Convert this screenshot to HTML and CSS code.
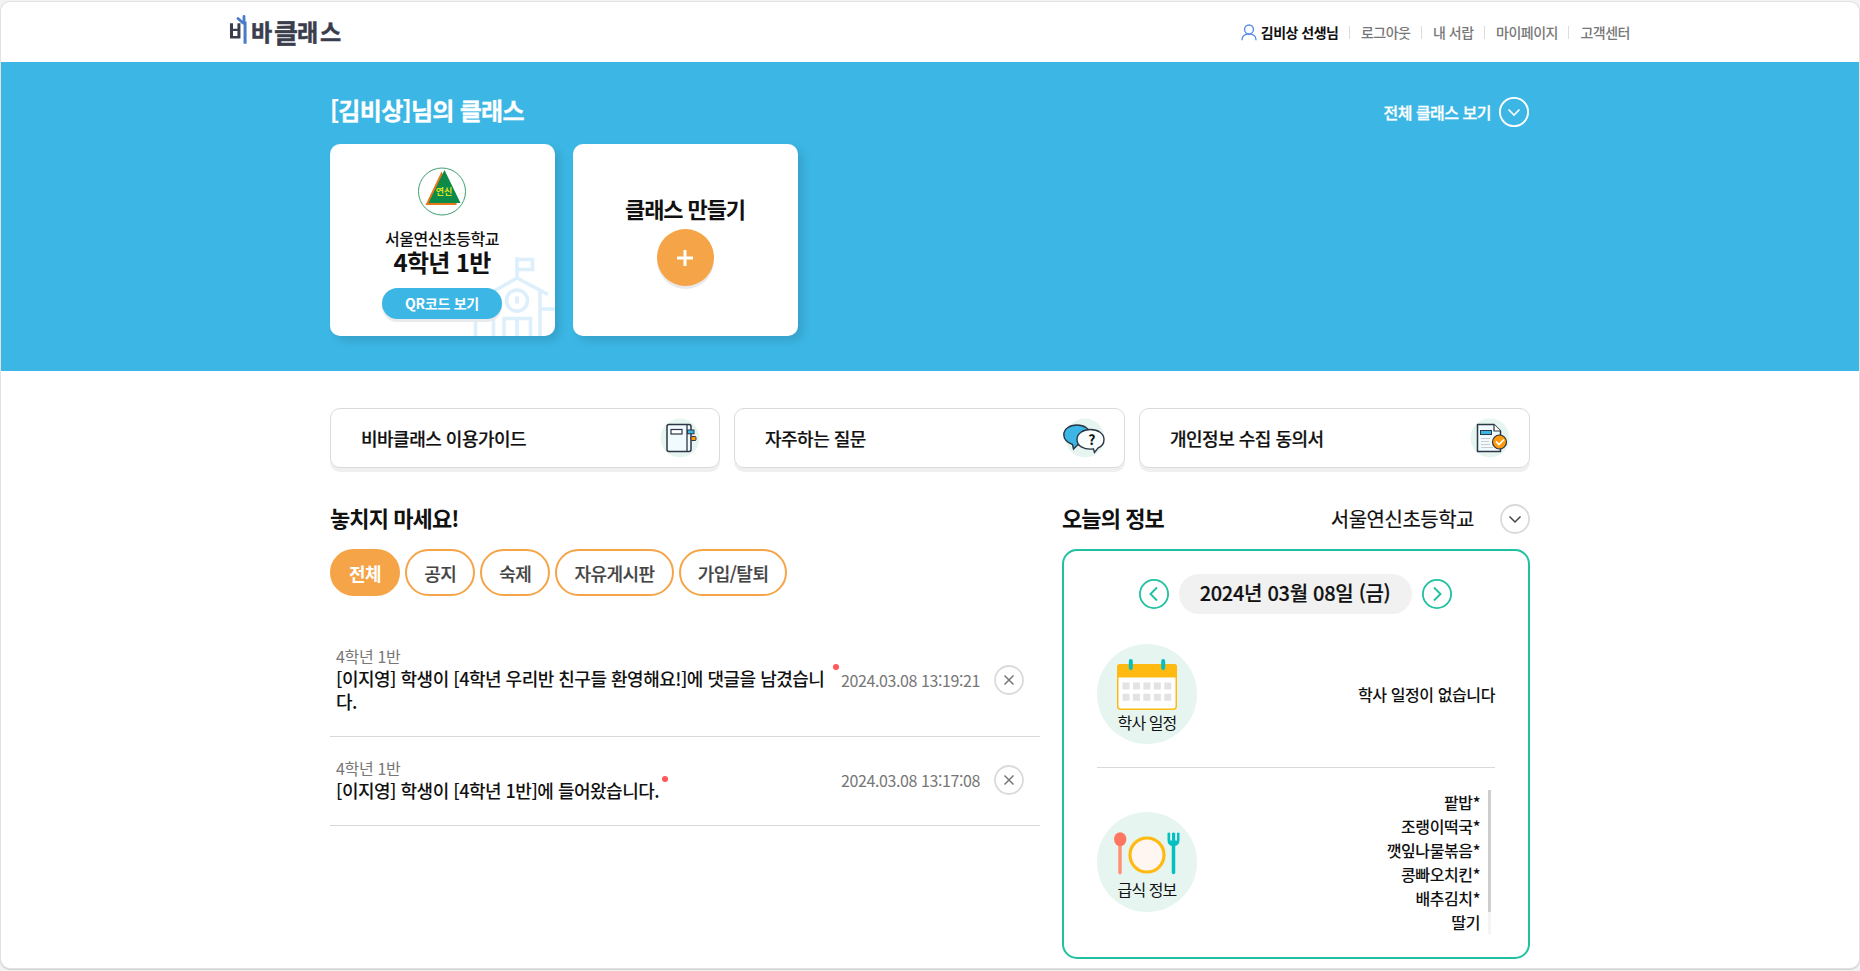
FILE: index.html
```html
<!DOCTYPE html>
<html lang="ko">
<head>
<meta charset="utf-8">
<title>비바클래스</title>
<link rel="stylesheet" href="styles.css">
</head>
<body>
<div class="page">
  <header class="header">
    <a class="logo">
      <span class="logo-first">비</span><span>바</span><span class="logo-tall">클</span><span>래</span><span>스</span>
      <svg class="logo-sprout" width="12" height="10" viewBox="0 0 12 10"><path d="M2 3.500L7 8M8 1.500L8 8" fill="none" stroke="#4a7bc8" stroke-width="2.800" stroke-linecap="round"/></svg>
    </a>
    <nav class="nav">
      <span class="nav-user"><svg width="16" height="17" viewBox="1 0 16 18" fill="none" stroke="#5a8cf0" stroke-width="1.500"><circle cx="9" cy="5.800" r="4.700"/><path d="M1.500 17.200C1.500 13.500 4 10.800 9 10.500C14 10.800 16.500 13.500 16.500 17.200"/></svg><b>김비상 선생님</b></span>
      <span>로그아웃</span><span>내 서랍</span><span>마이페이지</span><span>고객센터</span>
    </nav>
  </header>

  <section class="hero">
    <div class="container">
      <div class="hero-head">
        <h1>[김비상]님의 클래스</h1>
        <a class="all-classes">전체 클래스 보기
          <svg width="30" height="30" viewBox="0 0 30 30" fill="none" stroke="#fff"><circle cx="15" cy="15" r="14.100" stroke-width="1.900"/><path d="M9.500 12.500L15 18L20.500 12.500" stroke-width="1.600"/></svg>
        </a>
      </div>
      <div class="cards">
        <article class="card">
          <svg class="school" width="82" height="80" viewBox="473 256 82 80" fill="none" stroke="#dceffb" stroke-width="3.600">
            <path d="M517 257V278M517 259.500H532.500V269.500H517M488 294.500L517 278L548 294.500M493.500 292V336M540 291V336M540 309H555M475.500 336V309H493M504 336V318.500H530.500V336M517 318V336"/>
            <circle cx="517" cy="300.500" r="10.500"/><path d="M517 296.500V303.500" stroke-width="4"/>
          </svg>
          <svg class="emblem" width="48" height="49" viewBox="0 0 48 49"><circle cx="24" cy="24.500" r="23.500" fill="#fff" stroke="#3f9f70"/><path d="M23.500 4.500L7.500 38H38.500V34Z" fill="#e8751a"/><path d="M26.500 3L42.500 36H10.500Z" fill="#0c8a48"/><text x="26" y="27.500" text-anchor="middle" class="emblem-text">연신</text></svg>
          <p class="school-name">서울연신초등학교</p>
          <h2 class="grade">4학년 1반</h2>
          <button class="qr">QR코드 보기</button>
        </article>
        <article class="card card-new">
          <h2>클래스 만들기</h2>
          <button class="add"><svg width="16" height="16" viewBox="0 0 16 16" stroke="#fff" stroke-width="3"><path d="M8 0V16M0 8H16"/></svg></button>
        </article>
      </div>
    </div>
  </section>

  <main class="container">
    <div class="links">
      <a class="link">비바클래스 이용가이드
        <svg width="44" height="40" viewBox="0 0 44 40"><circle cx="22" cy="20" r="19.500" fill="#e6f5f0"/><rect x="9" y="6.500" width="24" height="27" rx="2" fill="#f0faff" stroke="#2c3644" stroke-width="1.500"/><path d="M29 6.500V33.500" stroke="#2c3644" stroke-width="1.300"/><rect x="13" y="11.500" width="11" height="4.500" fill="#fff" stroke="#2c3644" stroke-width="1.200"/><rect x="29.500" y="12" width="6.500" height="3.800" fill="#3cb7e5" stroke="#2c3644"/><rect x="33" y="18.500" width="5" height="4" rx="1" fill="#ff9a0c" stroke="#2c3644"/></svg>
      </a>
      <a class="link">자주하는 질문
        <svg width="44" height="40" viewBox="0 0 44 40"><circle cx="22" cy="20" r="19.500" fill="#e6f5f0"/><path d="M10.500 31L9.500 26.500C4 24.500 .8 21 .8 16.800C.8 11 6.500 7 14 7S27 11 27 16.800S20 27 14.500 27Z" fill="#3cb7e5" stroke="#2c3644" stroke-width="1.400"/><path d="M31.500 34.500L30.500 31C20 32 14 27.500 14 21.500C14 15.500 20 11.500 27.500 11.500S41 15.500 41 21.500C41 25.500 39 28.500 35 30Z" fill="#fafeff" stroke="#2c3644" stroke-width="1.400"/><text x="28.500" y="26.500" text-anchor="middle" class="question">?</text></svg>
      </a>
      <a class="link">개인정보 수집 동의서
        <svg width="44" height="40" viewBox="0 0 44 40"><circle cx="22" cy="20" r="19.500" fill="#e6f5f0"/><path d="M9.500 6.500H26L32.500 13V33.500H9.500Z" fill="#f0faff" stroke="#2c3644" stroke-width="1.500" stroke-linejoin="round"/><path d="M26 6.500V13H32.500" fill="#fff" stroke="#2c3644" stroke-width="1.200"/><rect x="12.500" y="12.500" width="11" height="4" fill="#3cb7e5" stroke="#2c3644"/><path d="M13 20.500H22M13 23.500H21M13 26.500H22M13 29.500H25" stroke="#ccc"/><circle cx="31.500" cy="24" r="7" fill="#ff9a0c" stroke="#2c3644" stroke-width="1.200"/><path d="M28 23.500L31 26.500L36 21.500" fill="none" stroke="#fff" stroke-width="1.700"/></svg>
      </a>
    </div>

    <div class="columns">
      <section class="news">
        <h2 class="section-title">놓치지 마세요!</h2>
        <div class="chips"><button class="chip active">전체</button><button class="chip">공지</button><button class="chip">숙제</button><button class="chip">자유게시판</button><button class="chip">가입/탈퇴</button></div>
        <ul class="list">
          <li>
            <div class="message"><small>4학년 1반</small><p>[이지영] 학생이 [4학년 우리반 친구들 환영해요!]에 댓글을 남겼습니다.<i class="dot dot-edge"></i></p></div>
            <time>2024.03.08 13:19:21</time>
            <svg class="close" width="30" height="30" viewBox="0 0 30 30" fill="none"><circle cx="15" cy="15" r="14" stroke="#dadada" stroke-width="1.800"/><path d="M10.500 10.500L19.500 19.500M19.500 10.500L10.500 19.500" stroke="#777" stroke-width="1.500"/></svg>
          </li>
          <li>
            <div class="message"><small>4학년 1반</small><p>[이지영] 학생이 [4학년 1반]에 들어왔습니다.<i class="dot"></i></p></div>
            <time>2024.03.08 13:17:08</time>
            <svg class="close" width="30" height="30" viewBox="0 0 30 30" fill="none"><circle cx="15" cy="15" r="14" stroke="#dadada" stroke-width="1.800"/><path d="M10.500 10.500L19.500 19.500M19.500 10.500L10.500 19.500" stroke="#777" stroke-width="1.500"/></svg>
          </li>
        </ul>
      </section>

      <section class="today">
        <div class="today-head">
          <h2 class="section-title">오늘의 정보</h2>
          <span class="today-school">서울연신초등학교</span>
          <svg width="30" height="30" viewBox="0 0 30 30" fill="none"><circle cx="15" cy="15" r="14" stroke="#dadada" stroke-width="1.800"/><path d="M9.500 12.500L15 18L20.500 12.500" stroke="#444" stroke-width="1.500"/></svg>
        </div>
        <div class="panel">
          <div class="date-row">
            <svg width="30" height="30" viewBox="0 0 30 30" fill="none" stroke="#1fc1a0"><circle cx="15" cy="15" r="14.100" stroke-width="1.800"/><path d="M18 8.500L11.500 15L18 21.500" stroke-width="1.900"/></svg>
            <span class="date">2024년 03월 08일 (금)</span>
            <svg width="30" height="30" viewBox="0 0 30 30" fill="none" stroke="#1fc1a0"><circle cx="15" cy="15" r="14.100" stroke-width="1.800"/><path d="M12 8.500L18.500 15L12 21.500" stroke-width="1.900"/></svg>
          </div>
          <div class="info schedule">
            <div class="badge">
              <svg width="60" height="51" viewBox="0 0 60 51"><rect x=".75" y="5.750" width="58.500" height="44.500" rx="3" fill="#fff" stroke="#ffba12" stroke-width="1.500"/><path d="M0 18.500V8Q0 5 3 5H57Q60 5 60 8V18.500Z" fill="#ffba12"/><path d="M13.800 2V9M46.200 2V9" stroke="#06bfc0" stroke-width="4" stroke-linecap="round"/><path d="M5.500 27H55M5.500 38.300H55" stroke="#e3e3e3" stroke-width="7" stroke-dasharray="7 3.450"/></svg>
              <span>학사 일정</span>
            </div>
            <p>학사 일정이 없습니다</p>
          </div>
          <div class="info meal">
            <div class="badge">
              <svg width="66" height="43" viewBox="0 0 66 43"><path d="M6 10V40.500" stroke="#ff9077" stroke-width="3.500" stroke-linecap="round"/><ellipse cx="6.200" cy="7.300" rx="6.100" ry="7" fill="#ff7660"/><circle cx="33" cy="23" r="17" fill="#fff6f1" stroke="#ffba12" stroke-width="3.200"/><path d="M59.500 12V40.500" stroke="#06bfc0" stroke-width="3.500" stroke-linecap="round"/><path d="M53.500 1V8Q53.500 14 59.500 14T65.500 8V1Q64 0 63 1V8.500H61.200V1Q59.500 0 58 1V8.500H56.200V1Q55 0 53.500 1Z" fill="#06bfc0"/></svg>
              <span>급식 정보</span>
            </div>
            <div class="menu">
              <ul><li>팥밥*</li><li>조랭이떡국*</li><li>깻잎나물볶음*</li><li>콩빠오치킨*</li><li>배추김치*</li><li>딸기</li></ul>
              <div class="scrollbar"><div class="thumb"></div></div>
            </div>
          </div>
        </div>
      </section>
    </div>
  </main>
</div>
</body>
</html>
```

FILE: styles.css
```css
* { box-sizing: border-box; margin: 0; padding: 0; }
body {
  height: 971px;
  padding: 2px 1px 3px;
  overflow: hidden;
  background: #f3f3f3;
  color: #111;
  font-family: "Noto Sans CJK KR", sans-serif;
  font-size: 16px;
  font-weight: 500;
  letter-spacing: -0.5px;
}
svg { display: block; flex: none; }
ul { list-style: none; }
button { border: 0; font: inherit; letter-spacing: inherit; }
.page {
  height: 966px;
  overflow: hidden;
  background: #fff;
  border-radius: 9px;
  box-shadow: 0 0 0 1px #e2e2e2, 0 1px 1px 1px #cfcfcf;
}
.container { width: 1200px; margin: 0 auto; }

.header {
  width: 1400px;
  height: 60px;
  margin: 0 auto;
  display: flex;
  align-items: center;
  justify-content: space-between;
}
.logo { position: relative; display: flex; height: 40px; margin-left: -2px; line-height: 38px; font-size: 23px; font-weight: 700; color: #3a3e4c; letter-spacing: 0; -webkit-text-stroke: 0.5px #3a3e4c; }
.logo span { width: 23px; }
.logo .logo-first { background: linear-gradient(90deg, #3a3e4c 65%, #4a7bc8 65%); background-clip: text; -webkit-background-clip: text; color: transparent; -webkit-text-stroke: 0; }
.logo-tall { font-size: 26px; line-height: 40px; }
.logo-sprout { position: absolute; left: 8px; top: 3px; }
.nav { display: flex; align-items: center; font-size: 14px; line-height: 20px; color: #777; }
.nav > span { display: flex; align-items: center; }
.nav > span + span::before { content: ""; width: 1px; height: 13px; margin: 0 11px 0 10.5px; background: #dcdcdc; }
.nav-user { gap: 4px; color: #111; }

.hero { height: 309px; padding-top: 35px; background: #3cb7e5; }
.hero-head { display: flex; justify-content: space-between; align-items: center; height: 30px; color: #fff; }
.hero-head h1 { margin-top: -4px; font-size: 24px; line-height: 30px; font-weight: 700; letter-spacing: -0.7px; -webkit-text-stroke: 0.3px #fff; }
.all-classes { display: flex; align-items: center; gap: 8px; padding-right: 1px; -webkit-text-stroke: 0.3px #fff; }
.cards { display: flex; gap: 18px; margin-top: 17px; }
.card {
  position: relative;
  width: 225px;
  height: 192px;
  display: flex;
  flex-direction: column;
  align-items: center;
  padding-right: 1px;
  overflow: hidden;
  background: #fff;
  border-radius: 10px;
  box-shadow: 5px 5px 10px rgba(0, 0, 0, .12);
}
.school { position: absolute; right: 0; bottom: 0; }
.emblem { margin-top: 23px; }
.emblem-text { font-size: 9px; font-weight: 700; fill: #d9e021; letter-spacing: 0; }
.school-name { margin-top: 10px; line-height: 24px; }
.grade { font-size: 24px; line-height: 24px; font-weight: 700; letter-spacing: -0.7px; }
.qr { position: relative; width: 120px; height: 31px; margin-top: 14px; padding-bottom: 1px; border-radius: 16px; background: #3cb7e5; color: #fff; font-size: 14px; font-weight: 700; letter-spacing: -0.25px; box-shadow: 0 3px 0 #e8eaec; }
.card-new h2 { margin-top: 49px; font-size: 22px; line-height: 30px; font-weight: 700; letter-spacing: -1.1px; }
.add { display: grid; place-items: center; width: 57px; height: 57px; margin-top: 6px; border-radius: 50%; background: #f5a447; box-shadow: 0 3px 0 #e9e9eb; }

.links { display: grid; grid-template-columns: 390px 391px 391px; gap: 14px; margin-top: 37px; }
.link {
  display: flex;
  align-items: center;
  justify-content: space-between;
  height: 60px;
  padding: 0 17px 0 30px;
  border: 1px solid #dadada;
  border-radius: 10px;
  box-shadow: 0 4px 0 #efefef;
  font-size: 18px;
  -webkit-text-stroke: 0.2px #111;
}
.question { font-size: 14px; font-weight: 700; fill: #111; }

.columns { display: flex; justify-content: space-between; margin-top: 36px; }
.news { width: 710px; }
.today { width: 468px; }
.section-title { height: 30px; font-size: 22px; line-height: 26px; font-weight: 700; letter-spacing: -0.9px; }
.chips { display: flex; gap: 5px; margin-top: 15px; }
.chip { height: 47px; padding: 0 17px; border: 2px solid #f5a447; border-radius: 24px; background: #fff; color: #444; font-size: 18px; -webkit-text-stroke: 0.2px #444; }
.chip.active { background: #f5a447; color: #fff; font-weight: 700; -webkit-text-stroke: 0; }
.list { margin-top: 29px; }
.list li { display: flex; align-items: center; padding: 20px 16px 22px 6px; border-bottom: 1px solid #d9d9d9; }
.message { flex: none; width: 505px; }
.message small { display: block; font-size: 16px; line-height: 22px; font-weight: 400; color: #777; letter-spacing: -0.35px; }
.message p { position: relative; padding: 0 10px 1px 0; font-size: 18px; line-height: 23px; word-break: break-all; }
.dot { position: absolute; width: 6px; height: 6px; margin: -3px 0 0 3px; border-radius: 50%; background: #ff5858; }
.dot-edge { right: 2px; top: -3px; margin: 0; }
.list time { flex: 1; font-weight: 400; color: #777; letter-spacing: -0.4px; }

.today-head { display: flex; align-items: center; height: 30px; }
.today-school { margin: 0 26px 0 auto; font-size: 20px; font-weight: 400; line-height: 28px; -webkit-text-stroke: 0.2px #111; }
.panel { height: 410px; margin-top: 15px; padding: 23px 33px; border: 2px solid #1fc1a0; border-radius: 15px; }
.date-row { display: flex; align-items: center; justify-content: center; gap: 10px; padding-right: 2px; }
.date { width: 233px; height: 40px; border-radius: 20px; background: #f1f1f1; font-size: 20px; line-height: 38px; text-align: center; letter-spacing: -0.3px; -webkit-text-stroke: 0.2px #111; }
.info { display: flex; align-items: center; justify-content: space-between; }
.info p { letter-spacing: -0.4px; }
.schedule { margin-top: 6px; height: 148px; border-bottom: 1px solid #d9d9d9; }
.badge { display: flex; flex-direction: column; align-items: center; width: 100px; height: 100px; padding-top: 15px; border-radius: 50%; background: #e6f5f0; font-weight: 400; letter-spacing: -0.9px; }
.badge span { line-height: 24px; }
.meal { height: 144px; margin-top: 22px; }
.meal .badge { padding-top: 20px; }
.meal .badge span { margin-top: 2px; }
.menu { display: flex; align-items: stretch; gap: 8px; padding-right: 4px; text-align: right; line-height: 24px; letter-spacing: -0.4px; }
.scrollbar { width: 3px; background: #f4f4f4; }
.thumb { height: 122px; background: #cecece; }
```
